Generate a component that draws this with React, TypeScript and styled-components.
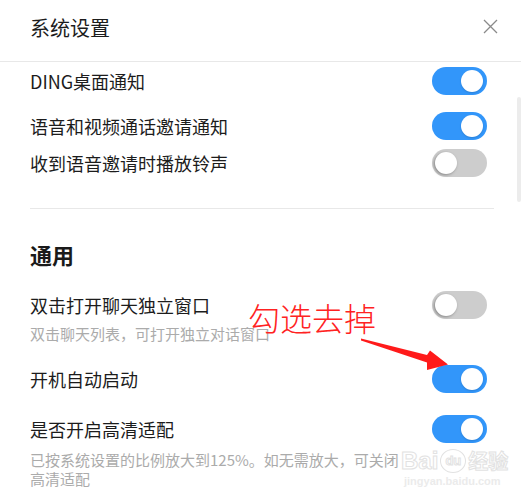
import React from "react";
import styled, { createGlobalStyle } from "styled-components";

const Global = createGlobalStyle`
  html, body { margin: 0; padding: 0; background: #ffffff; }
  body { font-family: "Noto Sans CJK SC", "Noto Sans", sans-serif; color: #1c1c1c; }
  * { box-sizing: border-box; }
`;

const Window = styled.div`
  position: relative;
  width: 521px;
  height: 499px;
  overflow: hidden;
  background: #fff;
`;

const Header = styled.div`
  height: 62px;
  display: flex;
  align-items: flex-start;
  justify-content: space-between;
  padding: 14px 23px 0 30px;
  border-bottom: 1px solid #e8e8e8;
`;

const Title = styled.div`
  font-size: 20px;
  line-height: 28px;
  color: #1c1c1c;
`;

const CloseButton = styled.button`
  border: 0;
  background: none;
  padding: 0;
  margin-top: 5px;
  width: 15px;
  height: 15px;
  display: flex;
  cursor: pointer;
`;

const Body = styled.div`
  padding: 0 34px 0 30px;
`;

const Row = styled.div<{ $h?: number; $mt?: number }>`
  display: flex;
  align-items: center;
  justify-content: space-between;
  height: ${(p) => p.$h ?? 37}px;
  margin-top: ${(p) => p.$mt ?? 0}px;
`;

const Label = styled.div`
  font-size: 18px;
  line-height: 24px;
  color: #1c1c1c;
`;

const Desc = styled.div<{ $mt?: number }>`
  font-size: 15px;
  line-height: 19px;
  color: #ababab;
  max-width: 372px;
  margin-top: ${(p) => p.$mt ?? 0}px;
`;

const Divider = styled.div`
  height: 1px;
  background: #e8e8e8;
  margin: 27px -7px 0 0;
`;

const Heading = styled.div`
  font-size: 22px;
  line-height: 32px;
  font-weight: 700;
  color: #1a1a1a;
  margin: 29px 0 16px;
`;

const Track = styled.div<{ $on: boolean }>`
  position: relative;
  flex: none;
  width: 55px;
  height: 28px;
  border-radius: 14px;
  background: ${(p) => (p.$on ? "#3296fa" : "#cdcdcd")};
`;

const Knob = styled.div<{ $on: boolean }>`
  position: absolute;
  top: 3px;
  left: ${(p) => (p.$on ? 29 : 3)}px;
  width: 22px;
  height: 22px;
  border-radius: 50%;
  background: #fff;
  box-shadow: ${(p) => (p.$on ? "0 1px 2px rgba(0,0,0,0.15)" : "-1px 1px 3px rgba(0,0,0,0.35)")};
`;

const ScrollThumb = styled.div`
  position: absolute;
  right: 0;
  top: 97px;
  width: 4px;
  height: 105px;
  border-radius: 2px;
  background: #ececec;
`;

const Annotation = styled.div`
  position: absolute;
  left: 248px;
  top: 295px;
  font-size: 32px;
  line-height: 44px;
  font-weight: 300;
  color: #ff2222;
`;

const ArrowSvg = styled.svg`
  position: absolute;
  left: 0;
  top: 0;
  pointer-events: none;
`;

const Watermark = styled.div`
  position: absolute;
  left: 401px;
  top: 447px;
  display: flex;
  flex-direction: column;
  align-items: flex-start;
  color: transparent;
  pointer-events: none;
`;

const WmTop = styled.div`
  display: flex;
  align-items: center;
  font-family: "Liberation Sans", sans-serif;
  font-size: 24px;
  line-height: 28px;
  font-weight: 700;
  -webkit-text-stroke: 1px #e2e2e2;
`;

const WmCn = styled.span`
  font-family: "Noto Sans CJK SC", sans-serif;
  font-size: 20px;
  font-weight: 700;
  margin-left: 2px;
`;

const WmDu = styled.span`
  display: inline-flex;
  align-items: center;
  justify-content: center;
  width: 26px;
  height: 24px;
  border: 1.5px solid #e2e2e2;
  border-radius: 50%;
  font-size: 13px;
  margin-left: 2px;
`;

const WmBottom = styled.div`
  font-family: "Liberation Sans", sans-serif;
  font-size: 11px;
  line-height: 12px;
  font-weight: 700;
  color: #ebebeb;
  margin-left: 3px;
`;

const Toggle = ({ on }: { on: boolean }) => (
  <Track $on={on}>
    <Knob $on={on} />
  </Track>
);

export default function App() {
  return (
    <>
      <Global />
      <Window>
        <Header>
          <Title>系统设置</Title>
          <CloseButton aria-label="close">
            <svg width="15" height="15" viewBox="0 0 15 15">
              <path d="M1 1 L14 14 M14 1 L1 14" stroke="#8a8a8a" strokeWidth="1.3" fill="none" />
            </svg>
          </CloseButton>
        </Header>
        <Body>
          <Row $h={38}>
            <Label>DING桌面通知</Label>
            <Toggle on />
          </Row>
          <Row $mt={7}>
            <Label>语音和视频通话邀请通知</Label>
            <Toggle on />
          </Row>
          <Row>
            <Label>收到语音邀请时播放铃声</Label>
            <Toggle on={false} />
          </Row>
          <Divider />
          <Heading>通用</Heading>
          <Row>
            <Label>双击打开聊天独立窗口</Label>
            <Toggle on={false} />
          </Row>
          <Desc $mt={1}>双击聊天列表，可打开独立对话窗口</Desc>
          <Row $mt={17}>
            <Label>开机自动启动</Label>
            <Toggle on />
          </Row>
          <Row $mt={13}>
            <Label>是否开启高清适配</Label>
            <Toggle on />
          </Row>
          <Desc $mt={3}>已按系统设置的比例放大到125%。如无需放大，可关闭高清适配</Desc>
        </Body>
        <ScrollThumb />
        <Watermark>
          <WmTop>
            Bai<WmDu>du</WmDu>
            <WmCn>经验</WmCn>
          </WmTop>
          <WmBottom>jingyan.baidu.com</WmBottom>
        </Watermark>
        <Annotation>勾选去掉</Annotation>
        <ArrowSvg width="521" height="499" viewBox="0 0 521 499">
          <polygon
            points="361,338.5 427,355 430,350.5 448,364.5 427,370 427,362.5 361,340.5"
            fill="#ff1a1a"
          />
        </ArrowSvg>
      </Window>
    </>
  );
}
